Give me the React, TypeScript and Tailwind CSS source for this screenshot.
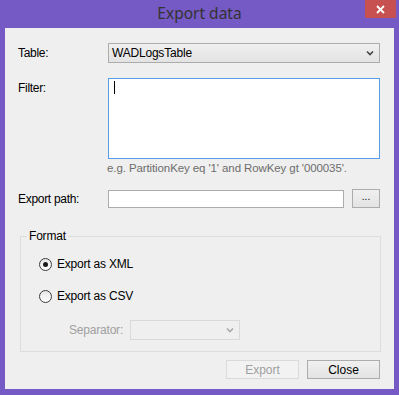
const font = "font-['Liberation_Sans',Arial,sans-serif]";

function Chevron({ color = "#444" }: { color?: string }) {
  return (
    <svg width="8" height="6" viewBox="0 0 8 6">
      <path d="M1 1.5 L4 4.5 L7 1.5" fill="none" stroke={color} strokeWidth="1.6" />
    </svg>
  );
}

function Radio({ checked, label }: { checked?: boolean; label: string }) {
  return (
    <div className="flex items-center h-[16px]">
      <span className="w-[13px] h-[13px] rounded-full border border-[#3c3c3c] bg-gradient-to-b from-[#e6e6e6] to-[#ffffff] flex items-center justify-center">
        {checked && <span className="w-[5px] h-[5px] rounded-full bg-[#1a1a1a]" />}
      </span>
      <span className="ml-[5px] text-[12px] text-black tracking-[-0.2px]">{label}</span>
    </div>
  );
}

export default function App() {
  return (
    <div className={`w-[399px] h-[395px] bg-[#7559c5] flex flex-col ${font}`}>
      {/* Title bar */}
      <div className="relative h-[28px] flex items-center justify-center">
        <span className="text-[15.5px] text-[#333] font-['Noto_Sans',sans-serif] leading-none pb-[1px]">Export data</span>
        <button className="absolute top-0 right-[3px] w-[31px] h-[18px] bg-[#c75050] flex items-center justify-center">
          <svg width="9" height="9" viewBox="0 0 9 9">
            <path d="M1 1 L8 8 M8 1 L1 8" stroke="#fff" strokeWidth="1.8" />
          </svg>
        </button>
      </div>

      {/* Client */}
      <div className="mx-[5px] h-[361px] bg-[#efefef] flex flex-col text-[12px] text-black">
        <div className="mt-[15px] flex items-center h-[20px] pl-[13px]">
          <span className="w-[90px] tracking-[-0.3px]">Table:</span>
          <div className="w-[272px] h-[20px] border border-[#acacac] bg-gradient-to-b from-[#f0f0f0] to-[#e3e3e3] flex items-center justify-between pl-[3px] pr-[5px]">
            <span className="tracking-[-0.2px]">WADLogsTable</span>
            <Chevron />
          </div>
        </div>

        <div className="mt-[15px] flex items-start pl-[13px]">
          <span className="w-[90px] tracking-[-0.3px] pt-[1px]">Filter:</span>
          <div className="w-[272px] h-[81px] border border-[#569de5] bg-white pl-[5px] pt-[2px]">
            <span className="block w-[1px] h-[13px] bg-black" />
          </div>
        </div>
        <div className="mt-[2px] h-[14px] pl-[102px] text-[11.5px] text-[#6d6d6d] leading-[14px] tracking-[-0.1px]">
          e.g. PartitionKey eq '1' and RowKey gt '000035'.
        </div>

        <div className="mt-[14px] flex items-center h-[19px] pl-[13px]">
          <span className="w-[90px] tracking-[-0.3px]">Export path:</span>
          <div className="w-[236px] h-[18px] border border-[#acacac] bg-white" />
          <button className="ml-[8px] w-[28px] h-[19px] border border-[#acacac] bg-gradient-to-b from-[#f0f0f0] to-[#e3e3e3] text-[10px] leading-none pb-[3px]">
            ...
          </button>
        </div>

        <div className="relative mt-[28px] ml-[15px] w-[361px] h-[116px] border border-[#dcdcdc]">
          <span className="absolute -top-[8px] left-[6px] px-[2px] bg-[#efefef] leading-[14px] tracking-[-0.2px]">Format</span>
          <div className="flex flex-col pl-[18px] pt-[19px]">
            <Radio checked label="Export as XML" />
            <div className="mt-[16px]">
              <Radio label="Export as CSV" />
            </div>
            <div className="mt-[16px] flex items-center pl-[30px]">
              <span className="w-[61px] text-[#a0a0a0] tracking-[-0.2px]">Separator:</span>
              <div className="w-[110px] h-[20px] border border-[#d9d9d9] bg-[#efefef] flex items-center justify-end pr-[5px]">
                <Chevron color="#a8a8a8" />
              </div>
            </div>
          </div>
        </div>

        <div className="mt-[8px] flex justify-end gap-[8px] pr-[14px]">
          <button className="w-[73px] h-[19px] border border-[#dadada] bg-[#f2f2f2] text-[#a0a0a0] text-[12px] leading-none">
            Export
          </button>
          <button className="w-[73px] h-[19px] border border-[#acacac] bg-gradient-to-b from-[#f0f0f0] to-[#e3e3e3] text-[12px] leading-none">
            Close
          </button>
        </div>
      </div>
    </div>
  );
}
